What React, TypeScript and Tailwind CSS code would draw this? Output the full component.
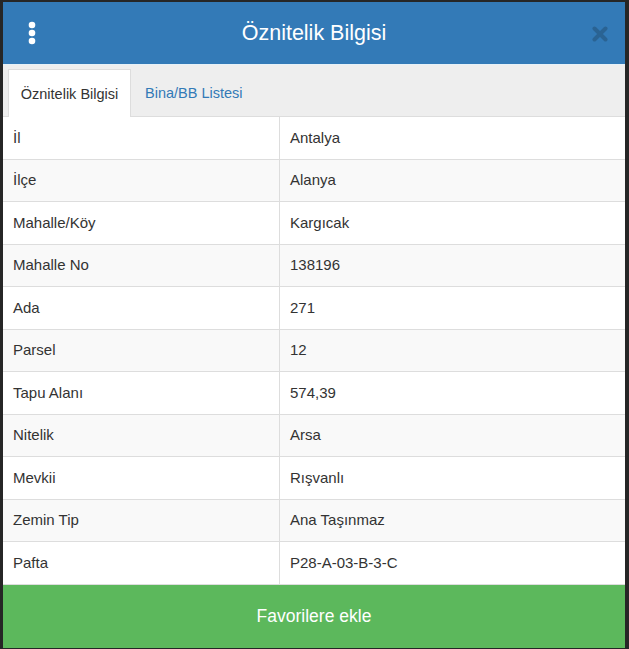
const rows: [string, string][] = [
  ['İl', 'Antalya'],
  ['İlçe', 'Alanya'],
  ['Mahalle/Köy', 'Kargıcak'],
  ['Mahalle No', '138196'],
  ['Ada', '271'],
  ['Parsel', '12'],
  ['Tapu Alanı', '574,39'],
  ['Nitelik', 'Arsa'],
  ['Mevkii', 'Rışvanlı'],
  ['Zemin Tip', 'Ana Taşınmaz'],
  ['Pafta', 'P28-A-03-B-3-C'],
];

function KebabIcon() {
  return (
    <svg width="10" height="24" viewBox="0 0 10 24" fill="white">
      <circle cx="5" cy="4" r="3.3" />
      <circle cx="5" cy="12" r="3.3" />
      <circle cx="5" cy="20" r="3.3" />
    </svg>
  );
}

function CloseIcon() {
  return (
    <svg width="16" height="16" viewBox="0 0 16 16">
      <path d="M2.5 2.5 L13.5 13.5 M13.5 2.5 L2.5 13.5" stroke="#2a6393" strokeWidth="4" strokeLinecap="round" />
    </svg>
  );
}

export default function App() {
  return (
    <div
      className="h-[649px] w-[629px] overflow-hidden bg-[#262626] pl-[3px] pt-[2px]"
      style={{ fontFamily: '"Liberation Sans", Arial, sans-serif' }}
    >
      <div className="flex h-[645px] w-[622px] flex-col bg-white">
        <div className="relative flex h-[62px] shrink-0 items-center justify-center bg-[#337ab7]">
          <button className="absolute left-[24px] top-[19px]">
            <KebabIcon />
          </button>
          <h1 className="text-[21.5px] text-white">Öznitelik Bilgisi</h1>
          <span className="absolute right-[17px] top-[24px]">
            <CloseIcon />
          </span>
        </div>
        <div className="flex h-[53px] shrink-0 items-end border-b border-[#dddddd] border-t border-t-[#e6f1f8] bg-[#eeeeee] pl-[5px]">
          <div className="-mb-px flex h-[48px] w-[123px] items-center justify-center border border-b-0 border-[#dddddd] bg-white pt-[2px] text-[14.5px] text-[#333333]">
            Öznitelik Bilgisi
          </div>
          <div className="flex h-[47px] items-center px-[14px] pt-[2px] text-[14.5px] text-[#337ab7]">
            Bina/BB Listesi
          </div>
        </div>
        <div className="flex-1">
          {rows.map(([k, v], i) => (
            <div
              key={k}
              className={`grid h-[42.5px] grid-cols-[277px_1fr] border-b border-[#dddddd] text-[15px] text-[#333333] ${
                i % 2 === 0 ? 'bg-white' : 'bg-[#f9f9f9]'
              }`}
            >
              <div className="flex items-center border-r border-[#dddddd] pl-[10px]">{k}</div>
              <div className="flex items-center pl-[10px]">{v}</div>
            </div>
          ))}
        </div>
        <button className="h-[63px] w-full shrink-0 bg-[#5cb85c] text-[17.5px] text-white">
          Favorilere ekle
        </button>
      </div>
    </div>
  );
}
